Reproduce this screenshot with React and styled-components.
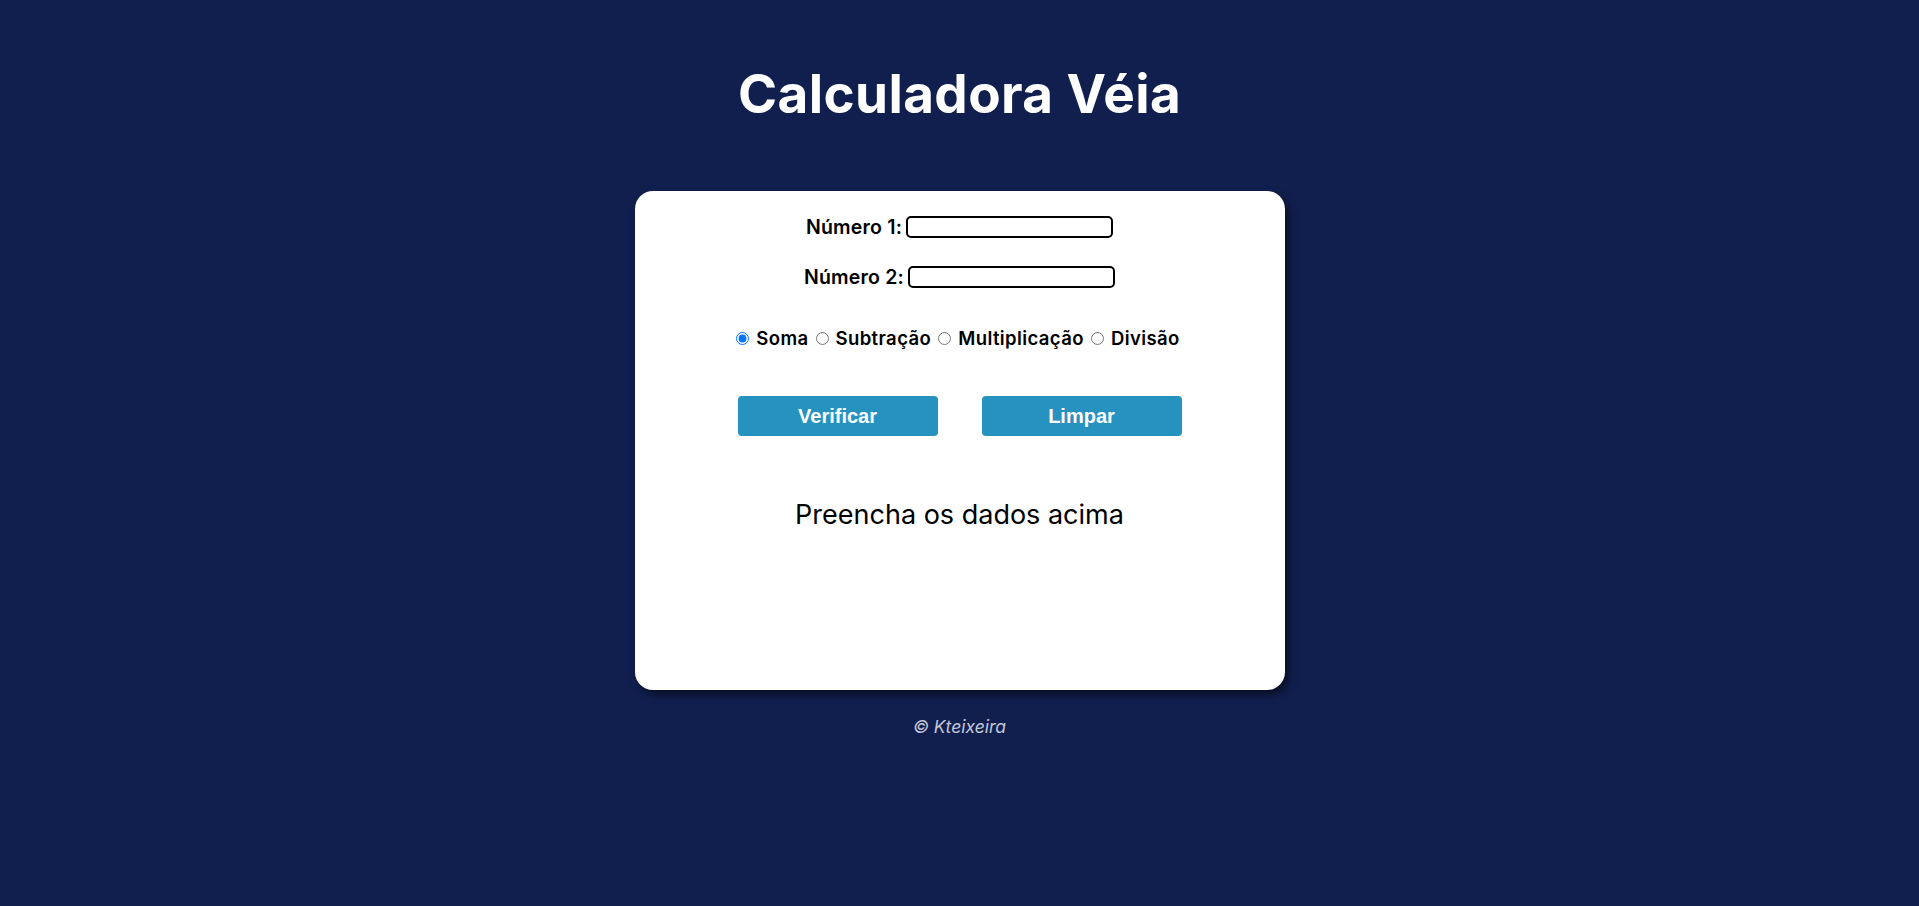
import * as React from "react";
import styled, { createGlobalStyle } from "styled-components";

const GlobalStyle = createGlobalStyle`
  html, body {
    margin: 0;
    padding: 0;
    background: #111f4f;
    font-family: Inter, "Noto Sans", sans-serif;
  }
`;

const Page = styled.main`
  display: flex;
  flex-direction: column;
  align-items: center;
  min-height: 906px;
`;

const Title = styled.h1`
  margin: 63px 0 0;
  height: 62px;
  line-height: 62px;
  font-size: 53px;
  font-weight: 700;
  color: #ffffff;
  letter-spacing: 0.4px;
`;

const Card = styled.section`
  margin-top: 66px;
  width: 650px;
  height: 499px;
  box-sizing: border-box;
  background: #ffffff;
  border-radius: 18px;
  box-shadow: 4px 5px 8px rgba(0, 0, 0, 0.55);
  display: flex;
  flex-direction: column;
  align-items: center;
  padding-top: 24px;
`;

const FieldRow = styled.div`
  display: flex;
  align-items: center;
  gap: 4px;
  height: 24px;
  margin-bottom: ${(props) => props.gap || "0"};
`;

const Label = styled.label`
  font-size: 19.5px;
  font-weight: 600;
  letter-spacing: 0.2px;
  color: #000;
`;

const TextInput = styled.input`
  width: 207px;
  height: 22px;
  box-sizing: border-box;
  border: 2px solid #000;
  border-radius: 5px;
  padding: 0 4px;
  font-size: 14px;
  outline: none;
`;

const Options = styled.div`
  display: flex;
  align-items: center;
  margin-top: 37px;
  height: 24px;
`;

const Option = styled.label`
  display: flex;
  align-items: center;
  font-size: 18.5px;
  font-weight: 600;
  letter-spacing: 0.4px;
  color: #000;
  margin-right: 5px;
  input {
    margin: 0 7px 0 2px;
    width: 13px;
    height: 13px;
  }
`;

const Buttons = styled.div`
  display: flex;
  gap: 44px;
  margin-top: 46px;
`;

const Button = styled.button`
  width: 200px;
  height: 40px;
  border: none;
  border-radius: 4px;
  background: #2692c0;
  color: #ffffff;
  font-family: "Liberation Sans", Arial, sans-serif;
  font-size: 20px;
  font-weight: 700;
  cursor: pointer;
`;

const Result = styled.p`
  margin: 62px 0 0;
  font-size: 27px;
  font-weight: 400;
  color: #000;
`;

const Footer = styled.footer`
  margin-top: 26px;
  font-size: 17.5px;
  font-style: italic;
  color: #c3c7d8;
`;

const OPS = ["Soma", "Subtração", "Multiplicação", "Divisão"];

export default function App() {
  const [op, setOp] = React.useState("Soma");
  const [a, setA] = React.useState("");
  const [b, setB] = React.useState("");

  return (
    <Page>
      <GlobalStyle />
      <Title>Calculadora Véia</Title>
      <Card>
        <FieldRow gap="26px">
          <Label htmlFor="n1">Número 1:</Label>
          <TextInput id="n1" value={a} onChange={(e) => setA(e.target.value)} />
        </FieldRow>
        <FieldRow>
          <Label htmlFor="n2">Número 2:</Label>
          <TextInput id="n2" value={b} onChange={(e) => setB(e.target.value)} />
        </FieldRow>
        <Options>
          {OPS.map((name) => (
            <Option key={name}>
              <input
                type="radio"
                name="op"
                checked={op === name}
                onChange={() => setOp(name)}
              />
              {name}
            </Option>
          ))}
        </Options>
        <Buttons>
          <Button type="button">Verificar</Button>
          <Button type="button" onClick={() => { setA(""); setB(""); }}>
            Limpar
          </Button>
        </Buttons>
        <Result>Preencha os dados acima</Result>
      </Card>
      <Footer>© Kteixeira</Footer>
    </Page>
  );
}
